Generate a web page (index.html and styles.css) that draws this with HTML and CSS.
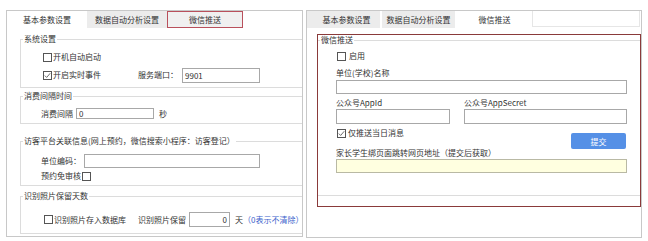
FILE: index.html
```html
<!DOCTYPE html>
<html lang="zh-CN">
<head>
    <meta charset="UTF-8">
    <title>参数设置</title>
    <link rel="stylesheet" href="styles.css">
</head>
<body>
    <div class="screen">
        <section class="panel panel-left">
            <div class="tabs">
                <div class="tab tab-a active">基本参数设置</div>
                <div class="tab tab-b">数据自动分析设置</div>
                <div class="tab tab-c marked">微信推送</div>
            </div>
            <div class="page">
                <fieldset class="group g-system">
                    <legend>系统设置</legend>
                    <div class="inner">
                        <div class="row r-autostart"><span class="cb"></span>开机自动启动</div>
                        <div class="row r-realtime">
                            <span class="cb checked"><svg viewBox="0 0 9 9" width="7" height="7"><path d="M1 4.6 L3.4 7 L8 1.6" fill="none" stroke="#444" stroke-width="1"/></svg></span>开启实时事件
                            <span class="port-label">服务端口：</span>
                            <input class="field port" value="9901">
                        </div>
                    </div>
                </fieldset>

                <fieldset class="group g-interval">
                    <legend>消费间隔时间</legend>
                    <div class="inner">
                        <div class="row r-interval">
                            消费间隔<input class="field interval" value="0"><span class="unit">秒</span>
                        </div>
                    </div>
                </fieldset>

                <fieldset class="group g-visitor">
                    <legend>访客平台关联信息(网上预约，微信搜索小程序：访客登记）</legend>
                    <div class="inner">
                        <div class="row r-code">单位编码：<input class="field code" value=""></div>
                        <div class="row r-noaudit">预约免审核<span class="cb"></span></div>
                    </div>
                </fieldset>

                <fieldset class="group g-photo">
                    <legend>识别照片保留天数</legend>
                    <div class="inner">
                        <div class="row r-photo">
                            <span class="cb"></span>识别照片存入数据库
                            <span class="keep-label">识别照片保留</span>
                            <input class="field days" value="0">
                            <span class="unit">天</span>
                            <span class="hint">（0表示不清除）</span>
                        </div>
                    </div>
                </fieldset>
            </div>
        </section>

        <section class="panel panel-right">
            <div class="tabs">
                <div class="tab tab-a">基本参数设置</div>
                <div class="tab tab-b">数据自动分析设置</div>
                <div class="tab tab-c active">微信推送</div>
                <div class="tab-rest"></div>
            </div>
            <div class="page">
                <div class="focus-box">
                    <fieldset class="group g-wechat">
                        <legend>微信推送</legend>
                        <div class="inner">
                            <div class="row r-enable"><span class="cb"></span>启用</div>
                            <div class="row caption c-school">单位(学校)名称</div>
                            <input class="field wide school" value="">
                            <div class="row caption c-app">
                                <span class="app-id-label">公众号AppId</span>
                                <span>公众号AppSecret</span>
                            </div>
                            <div class="row r-app">
                                <input class="field app-id" value="">
                                <input class="field app-secret" value="">
                            </div>
                            <div class="row r-today">
                                <span class="today"><span class="cb checked"><svg viewBox="0 0 9 9" width="7" height="7"><path d="M1 4.6 L3.4 7 L8 1.6" fill="none" stroke="#444" stroke-width="1"/></svg></span>仅推送当日消息</span>
                                <button class="submit">提交</button>
                            </div>
                            <div class="row caption c-url">家长学生绑页面跳转网页地址（提交后获取）</div>
                            <input class="field wide url" value="" readonly>
                        </div>
                    </fieldset>
                </div>
            </div>
        </section>
    </div>
</body>
</html>
```

FILE: styles.css
```css
* {
    margin: 0;
    padding: 0;
    box-sizing: border-box;
}

body {
    background: #fff;
    color: #333;
    font-family: "Noto Sans CJK SC", "Noto Sans", sans-serif;
    font-size: 8px;
    line-height: 10px;
}

.screen {
    display: flex;
    gap: 3px;
    padding: 10px 0 0 6px;
}

.panel {
    border: 1px solid #c8c8c8;
    overflow: hidden;
}

.panel-left {
    width: 297px;
    height: 227px;
}

.panel-right {
    width: 336px;
    height: 228px;
}

/* tabs */
.tabs {
    display: flex;
    height: 17px;
}

.tab {
    height: 17px;
    display: flex;
    align-items: center;
    justify-content: center;
    background: #ececec;
    white-space: nowrap;
}

.tab.active {
    background: #fff;
}

.panel-left .tab-a { width: 80px; }
.panel-left .tab-b { width: 80px; }
.panel-left .tab-c { width: 76px; }

.tab.marked {
    border: 1px solid #b9505c;
    background: #f0f0f0;
}

.panel-right .tab-a { width: 73px; padding-left: 6px; }
.panel-right .tab-b { width: 73px; margin-left: 2px; }
.panel-right .tab-c { width: 77px; padding-left: 2px; }

.tab-rest {
    width: 108px;
    height: 16px;
    border: 1px solid #e6e6e6;
    border-top: none;
}

/* group boxes */
.group {
    border: 1px solid #dcdcdc;
    min-inline-size: 0;
}

.group legend {
    line-height: 10px;
    padding: 0 1px;
    margin-left: 2px;
    white-space: nowrap;
}

.panel-left .group {
    margin-left: 13px;
    margin-right: -8px;
}

.g-system { margin-top: 6px; }
.g-interval { margin-top: 3px; }
.g-visitor { margin-top: 12px; }
.g-photo { margin-top: 5px; }

.row {
    display: flex;
    align-items: center;
    white-space: nowrap;
}

.cb {
    width: 9px;
    height: 9px;
    border: 1px solid #555;
    background: #fff;
    display: inline-flex;
    align-items: center;
    justify-content: center;
    flex: none;
}

.field {
    border: 1px solid #a8a8a8;
    background: #fff;
    font-family: inherit;
    font-size: 8px;
    color: #333;
    padding: 0 2px;
    outline: none;
}

/* 系统设置 */
.g-system .inner {
    padding: 0 0 4px 22px;
}

.r-autostart {
    margin-top: 7px;
    height: 12px;
}

.r-autostart .cb,
.r-realtime .cb {
    margin-right: 1px;
}

.r-realtime {
    margin-top: 4px;
    height: 16px;
}

.port-label {
    margin-left: 37px;
}

.port {
    margin-left: 4px;
    width: 78px;
    height: 15px;
}

/* 消费间隔 */
.g-interval .inner {
    padding: 0 0 4px 20px;
}

.r-interval {
    margin-top: 7px;
    height: 11px;
}

.interval {
    margin-left: 3px;
    width: 78px;
    height: 11px;
}

.unit {
    margin-left: 5px;
}

/* 访客平台 */
.g-visitor .inner {
    padding: 0 0 4px 20px;
}

.r-code {
    margin-top: 8px;
    height: 14px;
}

.code {
    margin-left: 3px;
    width: 176px;
    height: 14px;
}

.r-noaudit {
    margin-top: 3px;
    height: 10px;
}

.r-noaudit .cb {
    margin-left: 1px;
}

/* 照片 */
.g-photo .inner {
    padding: 0 0 6px 23px;
}

.r-photo {
    margin-top: 11px;
    height: 15px;
}

.r-photo .cb {
    margin-right: 1px;
}

.keep-label {
    margin-left: 12px;
}

.days {
    margin-left: 3px;
    width: 41px;
    height: 15px;
    text-align: right;
}

.hint {
    color: #3c5fcc;
    margin-left: 0;
}

/* 微信推送 */
.focus-box {
    margin: 6px 0 0 10px;
    width: 324px;
    height: 173px;
    border: 1px solid #8a3a3a;
}

.g-wechat {
    border-left: none;
    border-right: none;
}

.g-wechat .inner {
    padding: 0 13px 22px 18px;
}

.r-enable {
    margin-top: 6px;
    height: 10px;
}

.r-enable .cb {
    margin: 0 3px 0 1px;
}

.c-school {
    margin-top: 7px;
    height: 10px;
}

.field.wide {
    display: block;
    width: 291px;
    height: 14px;
}

.school {
    margin-top: 2px;
}

.c-app {
    margin-top: 4px;
    height: 10px;
}

.app-id-label {
    width: 128px;
}

.r-app {
    margin-top: 1px;
    height: 15px;
}

.app-id {
    width: 114px;
    height: 15px;
}

.app-secret {
    margin-left: 14px;
    width: 163px;
    height: 15px;
}

.r-today {
    margin-top: 4px;
    height: 20px;
    align-items: flex-start;
}

.today {
    display: flex;
    align-items: center;
    height: 10px;
}

.today .cb {
    margin: 0 2px 0 1px;
}

.submit {
    margin: 5px 1px 0 auto;
    width: 55px;
    height: 16px;
    border: none;
    border-radius: 2px;
    background: #5590e6;
    color: #fff;
    font-family: inherit;
    font-size: 8px;
}

.c-url {
    height: 10px;
}

.url {
    margin-top: 1px;
    background: #ffffe0;
    border-color: #b9b9a4;
}
```
